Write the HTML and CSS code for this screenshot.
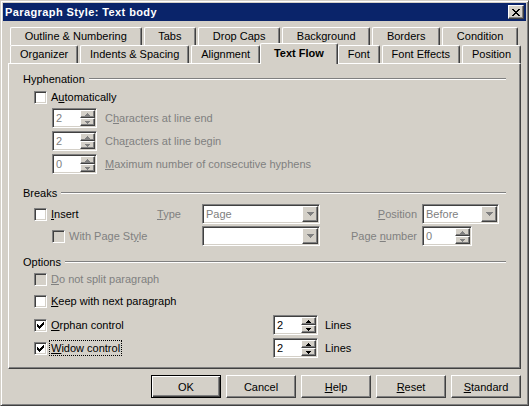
FILE: index.html
```html
<!DOCTYPE html>
<html lang="en">
<head>
  <meta charset="UTF-8" />
  <meta name="viewport" content="width=device-width, initial-scale=1.0"/>
  <title>Paragraph Style: Text body</title>
  <link rel="stylesheet" href="styles.css">
</head>
<body>

<div class="window">

  <!-- Title bar -->
  <div class="titlebar">
    <span class="title">Paragraph Style: Text body</span>
    <span class="close-btn">
      <svg width="8" height="7" viewBox="0 0 8 7" shape-rendering="crispEdges"><path d="M0 0h2v1h-2z M6 0h2v1h-2z M1 1h2v1h-2z M5 1h2v1h-2z M2 2h4v1h-4z M3 3h2v1h-2z M2 4h4v1h-4z M1 5h2v1h-2z M5 5h2v1h-2z M0 6h2v1h-2z M6 6h2v1h-2z" fill="#000"/></svg>
    </span>
  </div>

  <!-- Tabs -->
  <div class="tab-row back">
    <span class="tab">Outline &amp; Numbering</span>
    <span class="tab">Tabs</span>
    <span class="tab">Drop Caps</span>
    <span class="tab">Background</span>
    <span class="tab">Borders</span>
    <span class="tab">Condition</span>
  </div>
  <div class="tab-row front">
    <span class="tab">Organizer</span>
    <span class="tab">Indents &amp; Spacing</span>
    <span class="tab">Alignment</span>
    <span class="tab active">Text Flow</span>
    <span class="tab">Font</span>
    <span class="tab">Font Effects</span>
    <span class="tab">Position</span>
  </div>

  <div class="panel">

    <!-- Hyphenation -->
    <div class="section-head">Hyphenation</div>
    <div class="check-row first">
      <span class="checkbox"></span>
      <span class="label">A<u>u</u>tomatically</span>
    </div>
    <div class="spin-row">
      <span class="spin disabled">
        <span class="spin-field">2</span>
        <span class="spin-btns">
          <span class="spin-btn"><svg width="5" height="3" viewBox="0 0 5 3" shape-rendering="crispEdges"><path d="M2 0h1v1h-1z M1 1h3v1h-3z M0 2h5v1h-5z"/></svg></span>
          <span class="spin-btn"><svg width="5" height="3" viewBox="0 0 5 3" shape-rendering="crispEdges"><path d="M0 0h5v1h-5z M1 1h3v1h-3z M2 2h1v1h-1z"/></svg></span>
        </span>
      </span>
      <span class="label muted">C<u>h</u>aracters at line end</span>
    </div>
    <div class="spin-row">
      <span class="spin disabled">
        <span class="spin-field">2</span>
        <span class="spin-btns">
          <span class="spin-btn"><svg width="5" height="3" viewBox="0 0 5 3" shape-rendering="crispEdges"><path d="M2 0h1v1h-1z M1 1h3v1h-3z M0 2h5v1h-5z"/></svg></span>
          <span class="spin-btn"><svg width="5" height="3" viewBox="0 0 5 3" shape-rendering="crispEdges"><path d="M0 0h5v1h-5z M1 1h3v1h-3z M2 2h1v1h-1z"/></svg></span>
        </span>
      </span>
      <span class="label muted">Cha<u>r</u>acters at line begin</span>
    </div>
    <div class="spin-row">
      <span class="spin disabled">
        <span class="spin-field">0</span>
        <span class="spin-btns">
          <span class="spin-btn"><svg width="5" height="3" viewBox="0 0 5 3" shape-rendering="crispEdges"><path d="M2 0h1v1h-1z M1 1h3v1h-3z M0 2h5v1h-5z"/></svg></span>
          <span class="spin-btn"><svg width="5" height="3" viewBox="0 0 5 3" shape-rendering="crispEdges"><path d="M0 0h5v1h-5z M1 1h3v1h-3z M2 2h1v1h-1z"/></svg></span>
        </span>
      </span>
      <span class="label muted"><u>M</u>aximum number of consecutive hyphens</span>
    </div>

    <!-- Breaks -->
    <div class="section-head breaks-head">Breaks</div>
    <div class="breaks-grid">
      <div class="check-row">
        <span class="checkbox"></span>
        <span class="label"><u>I</u>nsert</span>
      </div>
      <span class="label muted"><u>T</u>ype</span>
      <span class="dropdown disabled">
        <span class="dd-text">Page</span>
        <span class="dd-btn"><svg width="7" height="4" viewBox="0 0 7 4" shape-rendering="crispEdges"><path d="M0 0h7v1h-7z M1 1h5v1h-5z M2 2h3v1h-3z M3 3h1v1h-1z"/></svg></span>
      </span>
      <span class="label muted right"><u>P</u>osition</span>
      <span class="dropdown small disabled">
        <span class="dd-text">Before</span>
        <span class="dd-btn"><svg width="7" height="4" viewBox="0 0 7 4" shape-rendering="crispEdges"><path d="M0 0h7v1h-7z M1 1h5v1h-5z M2 2h3v1h-3z M3 3h1v1h-1z"/></svg></span>
      </span>

      <div class="check-row indent">
        <span class="checkbox disabled"></span>
        <span class="label muted">With Page St<u>y</u>le</span>
      </div>
      <span></span>
      <span class="dropdown disabled">
        <span class="dd-text"></span>
        <span class="dd-btn"><svg width="7" height="4" viewBox="0 0 7 4" shape-rendering="crispEdges"><path d="M0 0h7v1h-7z M1 1h5v1h-5z M2 2h3v1h-3z M3 3h1v1h-1z"/></svg></span>
      </span>
      <span class="label muted right">Page <u>n</u>umber</span>
      <span class="spin wide disabled">
        <span class="spin-field">0</span>
        <span class="spin-btns">
          <span class="spin-btn"><svg width="5" height="3" viewBox="0 0 5 3" shape-rendering="crispEdges"><path d="M2 0h1v1h-1z M1 1h3v1h-3z M0 2h5v1h-5z"/></svg></span>
          <span class="spin-btn"><svg width="5" height="3" viewBox="0 0 5 3" shape-rendering="crispEdges"><path d="M0 0h5v1h-5z M1 1h3v1h-3z M2 2h1v1h-1z"/></svg></span>
        </span>
      </span>
    </div>

    <!-- Options -->
    <div class="section-head options-head">Options</div>
    <div class="opt-row nosplit">
      <div class="check-row opt-check">
        <span class="checkbox disabled"></span>
        <span class="label muted"><u>D</u>o not split paragraph</span>
      </div>
    </div>
    <div class="opt-row keep">
      <div class="check-row opt-check">
        <span class="checkbox"></span>
        <span class="label"><u>K</u>eep with next paragraph</span>
      </div>
    </div>
    <div class="opt-row orphan">
      <div class="check-row opt-check">
        <span class="checkbox"><svg width="7" height="7" viewBox="0 0 7 7" shape-rendering="crispEdges"><path d="M6 0h1v3h-1z M5 1h1v3h-1z M4 2h1v3h-1z M3 3h1v3h-1z M2 4h1v3h-1z M1 3h1v3h-1z M0 2h1v3h-1z"/></svg></span>
        <span class="label"><u>O</u>rphan control</span>
      </div>
      <span class="spin">
        <span class="spin-field">2</span>
        <span class="spin-btns">
          <span class="spin-btn"><svg width="5" height="3" viewBox="0 0 5 3" shape-rendering="crispEdges"><path d="M2 0h1v1h-1z M1 1h3v1h-3z M0 2h5v1h-5z"/></svg></span>
          <span class="spin-btn"><svg width="5" height="3" viewBox="0 0 5 3" shape-rendering="crispEdges"><path d="M0 0h5v1h-5z M1 1h3v1h-3z M2 2h1v1h-1z"/></svg></span>
        </span>
      </span>
      <span class="label lines">Lines</span>
    </div>
    <div class="opt-row widow">
      <div class="check-row opt-check">
        <span class="checkbox"><svg width="7" height="7" viewBox="0 0 7 7" shape-rendering="crispEdges"><path d="M6 0h1v3h-1z M5 1h1v3h-1z M4 2h1v3h-1z M3 3h1v3h-1z M2 4h1v3h-1z M1 3h1v3h-1z M0 2h1v3h-1z"/></svg></span>
        <span class="label focus"><u>W</u>idow control</span>
      </div>
      <span class="spin">
        <span class="spin-field">2</span>
        <span class="spin-btns">
          <span class="spin-btn"><svg width="5" height="3" viewBox="0 0 5 3" shape-rendering="crispEdges"><path d="M2 0h1v1h-1z M1 1h3v1h-3z M0 2h5v1h-5z"/></svg></span>
          <span class="spin-btn"><svg width="5" height="3" viewBox="0 0 5 3" shape-rendering="crispEdges"><path d="M0 0h5v1h-5z M1 1h3v1h-3z M2 2h1v1h-1z"/></svg></span>
        </span>
      </span>
      <span class="label lines">Lines</span>
    </div>

  </div>

  <!-- Dialog buttons -->
  <div class="buttons">
    <span class="btn default">OK</span>
    <span class="btn">Cancel</span>
    <span class="btn"><u>H</u>elp</span>
    <span class="btn"><u>R</u>eset</span>
    <span class="btn"><u>S</u>tandard</span>
  </div>

</div>

</body>
</html>
```

FILE: styles.css
```css
* {
  box-sizing: border-box;
}
body {
  margin: 0;
  font-family: 'Liberation Sans', Arial, sans-serif;
  font-size: 11px;
  color: #000;
  background: #d4d0c8;
}
u {
  text-decoration-thickness: 1px;
  text-underline-offset: 1px;
}

.window {
  width: 529px;
  height: 406px;
  background: #d4d0c8;
  border: 1px solid;
  border-color: #d4d0c8 #404040 #404040 #d4d0c8;
  box-shadow: inset 1px 1px #fff, inset -1px -1px #808080;
  padding: 1px 2px 2px 2px;
}

/* title bar */
.titlebar {
  height: 18px;
  margin-top: 1px;
  background: #0a246a;
  display: flex;
  align-items: center;
  justify-content: space-between;
  padding: 0 2px 0 2px;
}
.title {
  color: #fff;
  font-weight: bold;
  font-size: 11px;
  letter-spacing: 0.4px;
}
.close-btn {
  width: 16px;
  height: 14px;
  background: #d4d0c8;
  border: 1px solid;
  border-color: #fff #404040 #404040 #fff;
  box-shadow: inset -1px -1px #808080;
  display: flex;
  align-items: center;
  justify-content: center;
}

/* tabs */
.tab-row {
  display: flex;
  gap: 2px;
  height: 18px;
}
.tab-row.back {
  margin: 6px 8px 0 7px;
}
.tab-row.front {
  margin: 0 5px 0 7px;
  align-items: flex-end;
}
.tab {
  flex: 1 1 auto;
  height: 18px;
  padding: 0 5px;
  text-align: center;
  line-height: 17px;
  white-space: nowrap;
  background: #d4d0c8;
  border-top: 1px solid #fff;
  border-left: 1px solid #fff;
  border-right: 1px solid #404040;
  border-radius: 2px 2px 0 0;
  box-shadow: inset -1px 0 #808080;
}
.tab.active {
  position: relative;
  z-index: 1;
  height: 21px;
  margin: 0 -2px -1px -2px;
  padding: 0 9px;
  font-weight: bold;
  line-height: 19px;
}

/* page panel */
.panel {
  height: 306px;
  margin: 0 5px 0 5px;
  border: 1px solid;
  border-color: #fff #404040 #404040 #fff;
  box-shadow: inset -1px -1px #808080;
  padding: 8px 14px 0 14px;
}

.section-head {
  display: flex;
  align-items: center;
  height: 14px;
  gap: 4px;
}
.section-head::after {
  content: '';
  flex: 1;
  border-top: 1px solid #808080;
  border-bottom: 1px solid #fff;
}
.breaks-head { margin-top: 12px; }
.options-head { margin-top: 9px; }

.check-row {
  display: flex;
  align-items: center;
  gap: 4px;
  height: 14px;
}
.check-row.first {
  margin: 4px 0 0 11px;
}
.check-row.indent {
  margin-left: 18px;
}

.checkbox {
  width: 13px;
  height: 13px;
  flex: none;
  background: #fff;
  border: 1px solid;
  border-color: #808080 #fff #fff #808080;
  box-shadow: inset 1px 1px #404040, inset -1px -1px #d4d0c8;
  display: flex;
  align-items: center;
  justify-content: center;
}
.checkbox.disabled {
  background: #d4d0c8;
}
.checkbox svg {
  fill: #000;
}

.label {
  white-space: nowrap;
}
.muted {
  color: #808080;
}
.right {
  text-align: right;
  padding-right: 5px;
}

/* spin fields */
.spin-row {
  display: flex;
  align-items: center;
  gap: 8px;
  margin: 3px 0 0 29px;
  height: 20px;
}
.spin-row:nth-of-type(3) {
  margin-top: 4px;
}
.spin {
  width: 45px;
  height: 20px;
  flex: none;
  display: flex;
  background: #fff;
  border: 1px solid;
  border-color: #808080 #fff #fff #808080;
  box-shadow: inset 1px 1px #404040, inset -1px -1px #d4d0c8;
  padding: 1px;
}
.spin.wide {
  width: 50px;
}
.spin-field {
  flex: 1;
  padding-left: 2px;
  line-height: 16px;
}
.spin.disabled .spin-field {
  color: #808080;
}
.spin-btns {
  width: 15px;
  display: flex;
  flex-direction: column;
}
.spin-btn {
  height: 8px;
  background: #d4d0c8;
  border: 1px solid;
  border-color: #fff #404040 #404040 #fff;
  box-shadow: inset -1px -1px #808080;
  display: flex;
  align-items: center;
  justify-content: center;
  fill: #000;
}
.spin.disabled .spin-btn {
  fill: #808080;
}

/* dropdowns */
.dropdown {
  width: 118px;
  height: 20px;
  display: flex;
  background: #fff;
  border: 1px solid;
  border-color: #808080 #fff #fff #808080;
  box-shadow: inset 1px 1px #404040, inset -1px -1px #d4d0c8;
  padding: 1px;
}
.dropdown.small {
  width: 77px;
}
.dd-text {
  flex: 1;
  padding-left: 2px;
  line-height: 16px;
  color: #808080;
}
.dd-btn {
  width: 16px;
  background: #d4d0c8;
  border: 1px solid;
  border-color: #fff #404040 #404040 #fff;
  box-shadow: inset -1px -1px #808080;
  display: flex;
  align-items: center;
  justify-content: center;
  fill: #808080;
}

.breaks-grid {
  display: grid;
  grid-template-columns: 123px 45px 118px 102px auto;
  grid-auto-rows: 20px;
  row-gap: 2px;
  align-items: center;
  margin: 4px 0 0 11px;
}

/* options */
.opt-row {
  display: flex;
  align-items: center;
  margin-left: 11px;
}
.opt-check {
  width: 239px;
}
.opt-row.nosplit { margin-top: 3px; }
.opt-row.keep { margin-top: 8px; }
.opt-row.orphan { margin-top: 7px; }
.opt-row.widow { margin-top: 3px; }
.lines {
  margin-left: 7px;
}
.focus {
  outline: 1px dotted #000;
  outline-offset: 1px;
}

/* bottom buttons */
.buttons {
  display: flex;
  justify-content: flex-end;
  gap: 5px;
  margin: 6px 5px 0 0;
}
.btn {
  width: 70px;
  height: 23px;
  display: flex;
  align-items: center;
  justify-content: center;
  background: #d4d0c8;
  border: 1px solid;
  border-color: #fff #404040 #404040 #fff;
  box-shadow: inset -1px -1px #808080;
}
.btn.default {
  border-color: #000;
  box-shadow: inset 1px 1px #fff, inset -1px -1px #404040, inset -2px -2px #808080;
}
```
